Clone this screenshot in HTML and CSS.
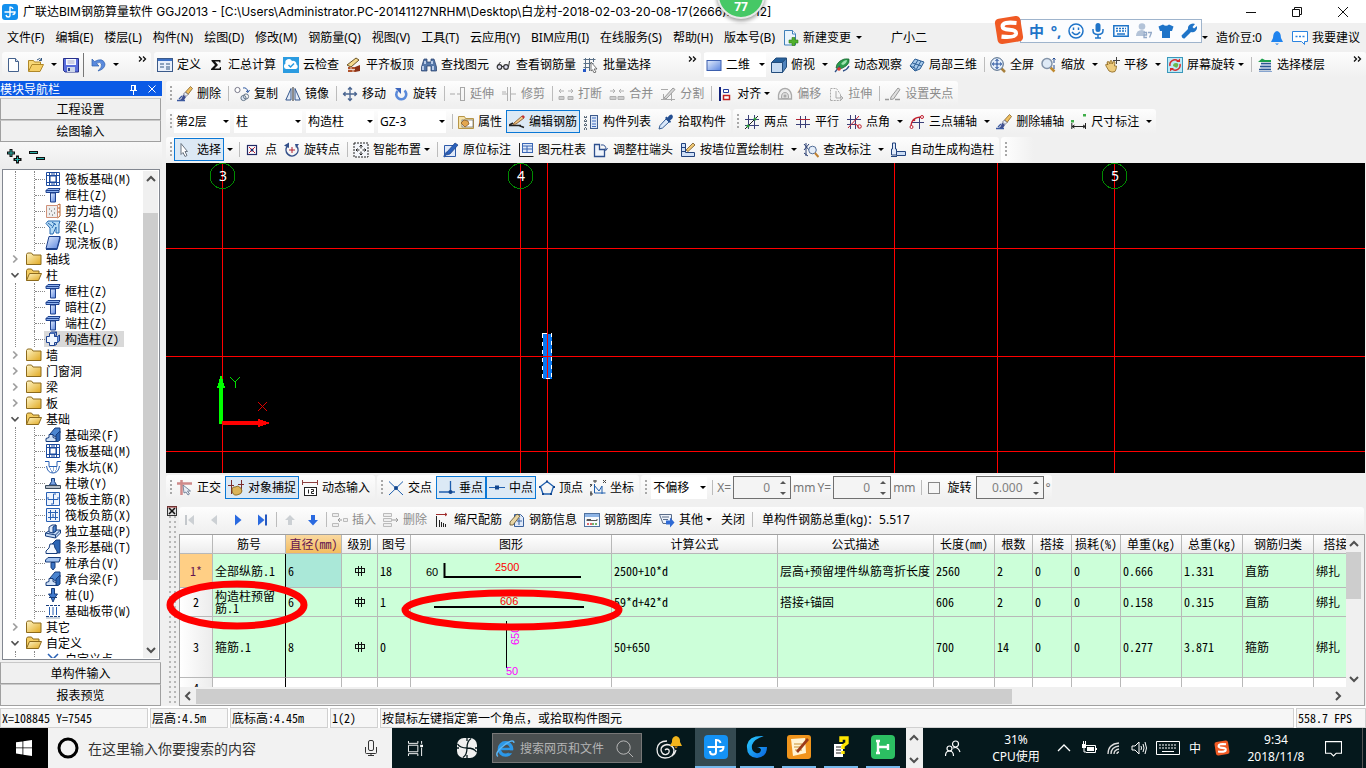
FILE: index.html
```html
<!DOCTYPE html>
<html lang="zh-CN">
<head>
<meta charset="utf-8">
<title>广联达BIM钢筋算量软件 GGJ2013</title>
<link rel="stylesheet" href="styles.css">
</head>
<body>
<svg class="sprite" aria-hidden="true">
<defs>
<linearGradient id="gb" x1="0" y1="0" x2="1" y2="1"><stop offset="0" stop-color="#e4edfc"/><stop offset="1" stop-color="#5b86e0"/></linearGradient>
<linearGradient id="gy" x1="0" y1="0" x2="1" y2="1"><stop offset="0" stop-color="#fff6c8"/><stop offset="1" stop-color="#e0a820"/></linearGradient>
<linearGradient id="gs" x1="0" y1="0" x2="1" y2="1"><stop offset="0" stop-color="#2ad0ff"/><stop offset="1" stop-color="#0a62e0"/></linearGradient>
</defs>
<symbol id="app" viewBox="0 0 16 16"><rect width="16" height="16" rx="3" fill="#1390ee"/><path d="M8 2.500v9q0 1.500-1.800 1.500T4 11M2.500 8h10.500q0 2.500-2.500 2.500M8 3q2.500 0 3 2" fill="none" stroke="#fff" stroke-width="1.400"/></symbol>
<symbol id="new" viewBox="0 0 16 16"><path d="M3.500 1.500h7l3 3v10h-10z" fill="#fdfeff" stroke="#44618c"/><path d="M10.500 1.500v3h3" fill="#cfe0f5" stroke="#44618c"/></symbol>
<symbol id="open" viewBox="0 0 16 16"><path d="M.5 14V3.500h5l1 1.500h6v2" fill="#f8d878" stroke="#b08828"/><path d="M.5 14.500 4 7.500h11.500L12 14.500z" fill="#f6cf66" stroke="#b08828"/><path d="M9 3q3-3 4.500 0m0-2v2.500H11" fill="none" stroke="#31557f"/></symbol>
<symbol id="save" viewBox="0 0 16 16"><path d="M.5 1.500h15v13.500H2L.5 13.500z" fill="#5a6edd" stroke="#27308b"/><rect x="3" y="2" width="10" height="6" fill="#f4f7ff"/><path d="M4.500 4h7M4.500 6h7" stroke="#aac"/><rect x="4" y="10" width="8" height="5" fill="#cdd6ea"/><rect x="5" y="11" width="2" height="3" fill="#27408b"/></symbol>
<symbol id="undo" viewBox="0 0 16 16"><path d="M2 2v7h7L6.500 6.500Q10 4 11.500 7 12.500 10 8 14q7-2 7-7Q13 0 4.500 4.500z" fill="#5a8ade" stroke="#2c5fae" stroke-width=".7"/></symbol>
<symbol id="form" viewBox="0 0 16 16"><rect x=".5" y="1.500" width="15" height="13" fill="#e8effa" stroke="#3b5a8a"/><path d="M1 3h14" stroke="#3b6fc4" stroke-width="2"/><path d="M3 7h4M3 10h4M9 7h4M9 10h4M9 12h4" stroke="#31557f"/></symbol>
<symbol id="sigma" viewBox="0 0 16 16"><path d="M3.500 3h9v2.500h-1L11 4.500H7L10 8l-3.500 3.500H11.500l.5-1.500h1V13H3v-1L7 8 3.500 4z" fill="#111"/></symbol>
<symbol id="cloud" viewBox="0 0 16 16"><rect width="16" height="16" fill="#2b9be0"/><path d="M3 12a3 3 0 0 1-.5-5.500A3.500 3.500 0 0 1 9 4a3.500 3.500 0 0 1 4.500 3.500 2.500 2.500 0 0 1-.5 4.500z" fill="#fff"/><path d="m5.500 8 2 2 3.500-3.500" fill="none" stroke="#2b9be0" stroke-width="1.500"/></symbol>
<symbol id="slab" viewBox="0 0 16 16"><path d="m1 8 9-7 3 2-8 7z" fill="#f5d98c" stroke="#6b5426"/><path d="M2 10h7v5H2z" fill="#b1532c"/><path d="M2 12.500h7M5 10v2.500M7 12.500V15" stroke="#fff" stroke-width=".7"/><path d="m9 10 5-2v6l-5 1z" fill="#8a3218"/></symbol>
<symbol id="bino" viewBox="0 0 16 16"><path d="M3 2h3v3h4V2h3l2.500 8v4H10V9H6v5H.5v-4z" fill="#5577a8" stroke="#213a68" stroke-width=".7"/><path d="M2 9v4M12 9v4M4 4v3M11 4v3" stroke="#dbe8fb" stroke-width="1.500"/></symbol>
<symbol id="glass" viewBox="0 0 16 16"><circle cx="3.500" cy="10" r="2.300" fill="#dde" stroke="#333" stroke-width="1.200"/><circle cx="10" cy="10" r="2.300" fill="#dde" stroke="#333" stroke-width="1.200"/><path d="M6 9.500h2M12.500 10l1-6M2 8l2.500-3" fill="none" stroke="#333"/></symbol>
<symbol id="batch" viewBox="0 0 16 16"><path d="M.5 2.500h12M.5 6.500h10M.5 10.500h6M2.500 1v13M6.500 1v13M10.500 1v4" stroke="#596f86" fill="none"/><rect x="0" y="12" width="3" height="3" fill="#2458c8"/><path d="m8 5 6 7h-3l2 3-2 .8-1.500-3L8 14z" fill="#fff" stroke="#555" stroke-width=".8"/></symbol>
<symbol id="rect2d" viewBox="0 0 16 16"><rect x="1" y="3.500" width="14" height="10" fill="url(#gb)" stroke="#3c5fae"/></symbol>
<symbol id="cube" viewBox="0 0 16 16"><path d="M.5 5.500 5 1h10.500l-4 4.500z" fill="#24609c" stroke="#234d7c"/><path d="M.5 5.500h11v10H.5z" fill="#c6dbf2" stroke="#234d7c"/><path d="m11.500 5.500 4-4.500v9l-4 5.500z" fill="#4f83bd" stroke="#234d7c"/></symbol>
<symbol id="orbit" viewBox="0 0 16 16"><path d="M2 11Q2 7 6 4t9-2q1 4-3 7t-7 3z" fill="#2b9c4c" stroke="#18602e" stroke-width=".7"/><path d="M7 7q3-4 6-4 0 3-4 5z" fill="#9ee3ae"/><path d="M1 15 6 9m3 5q4-1 6-5" stroke="#2e4f86" stroke-width="1.300" fill="none"/><circle cx="5" cy="12" r="1.800" fill="#e03a2a"/></symbol>
<symbol id="local3d" viewBox="0 0 16 16"><path d="M1 9 6 2l9 3-4 7-5 2z" fill="#a7c9ea" stroke="#2d5f96"/><path d="m3.500 6 9 3M9 3 4 11M12 4 7 13M1 9l5 2v3" stroke="#2d5f96" fill="none"/></symbol>
<symbol id="full" viewBox="0 0 16 16"><path d="m11.500 11.500 3.500 3.500" stroke="#a8803c" stroke-width="2.500"/><circle cx="7" cy="7" r="6.300" fill="#e4eefb" stroke="#46607f"/><path d="M7 2.500v9M2.500 7h9M5.500 4 7 2.300 8.500 4M5.500 10 7 11.700 8.500 10M4 5.500 2.300 7 4 8.500M10 5.500 11.700 7 10 8.500" fill="none" stroke="#1f4c9a"/></symbol>
<symbol id="zoom" viewBox="0 0 16 16"><path d="m9.500 10.500 4 4" stroke="#c08a30" stroke-width="2.500"/><circle cx="6" cy="6.500" r="5" fill="#dfeaf6" stroke="#8393a8" stroke-width="1.500"/><path d="M13 1v5m-1.500-3.500L13 1l1.500 1.500M13 8v4" stroke="#234a90" fill="none"/></symbol>
<symbol id="hand" viewBox="0 0 16 16"><path d="M2 9q-1-2 1-2l1 1-1-3q1-1 2 0l1 2V4q1-1 2 0v3l1-2q1-1 2 0L10.500 9l2 0q0 3-1.500 5.500Q8 16 5 14z" fill="#edcb7c" stroke="#8a6420" stroke-width=".8"/><path d="M12.500 0v7M9 3.500h7" stroke="#444"/></symbol>
<symbol id="scrrot" viewBox="0 0 16 16"><rect x=".5" y=".5" width="15" height="15" fill="#bfe8f6" stroke="#3a98bb"/><path d="M3 9a5 5 0 0 1 8-5M13 7a5 5 0 0 1-8 5" fill="none" stroke="#d82c2c" stroke-width="1.500"/><path d="M9 5h4V1.500zM7 11H3v3.500z" fill="#d82c2c"/><path d="M6 9q0-3 3-3t2 3-3 1z" fill="#6ab84c"/></symbol>
<symbol id="floor" viewBox="0 0 16 16"><path d="M1 5 5 1.500 8 3h6v2z" fill="#1ea04c"/><path d="M4 6.500h10M3 9.500h11M2 12.500h12" stroke="#2c5793" stroke-width="1.600"/><path d="M2 14.500h13M4 8h10M4 11h10" stroke="#86a4cf"/></symbol>
<symbol id="brush" viewBox="0 0 16 16"><path d="m8.500 6 5-5.500 2 2L11 8.500z" fill="#f0c060" stroke="#735018" stroke-width=".7"/><path d="m6.500 8 2-2 2.500 2.500L9 10.500z" fill="#e8eef8" stroke="#556" stroke-width=".7"/><path d="M6 8.500 9 11l-2 3H3q2-1 3-5.500z" fill="#3f4f8f"/><path d="M0 14.500h8M2 13l3-3" stroke="#3c5aa0" stroke-width="1.300"/></symbol>
<symbol id="copy" viewBox="0 0 16 16"><circle cx="3.500" cy="4" r="2.600" fill="#fff" stroke="#778"/><circle cx="9.500" cy="12" r="2.600" fill="#dfe7f4" stroke="#678"/><circle cx="12" cy="10.500" r="2.600" fill="none" stroke="#678"/><path d="M9 2q4-1 5 4m-2-1 2 1.500L15.500 4" stroke="#2d57a0" fill="none"/></symbol>
<symbol id="mirror" viewBox="0 0 16 16"><path d="M.8 14 6 2.500V14zM15.200 14 10 2.500V14z" fill="#e3ebf7" stroke="#35578c"/><path d="M8 1v14" stroke="#222"/></symbol>
<symbol id="move" viewBox="0 0 16 16"><path d="M8 1v14M1 8h14M6 3.500 8 1.500l2 2M6 12.500 8 14.500l2-2M3.500 6 1.500 8l2 2M12.500 6 14.500 8l-2 2" fill="none" stroke="#4a6590" stroke-width="1.300"/></symbol>
<symbol id="rot" viewBox="0 0 16 16"><path d="M4.500 5a5 5 0 1 0 7-.5" fill="none" stroke="#5a8ada" stroke-width="2.600"/><path d="M2 2h6v6z" fill="#3c65bc"/></symbol>
<symbol id="ext" viewBox="0 0 16 16"><path d="M0 8h5M7 8h3M10.500 1v14M14.500 1v14M10 1.500h5M10 14.500h5" stroke="#a8a8a8" fill="none"/></symbol>
<symbol id="trim" viewBox="0 0 16 16"><path d="M1 8h5M10 8h5M1 6h4M6.500 1v14M9.500 1v14" stroke="#b0b0b0" fill="none"/></symbol>
<symbol id="brk" viewBox="0 0 16 16"><path d="M1 10.500h5v3H1zM10 10.500h5v3h-5z" fill="#ccc" stroke="#b0b0b0"/><path d="M1 5h5M10 5h5M3 3 1 5l2 2M13 3l2 2-2 2" stroke="#b0b0b0" fill="none"/></symbol>
<symbol id="merge" viewBox="0 0 16 16"><path d="M1 10.500h6v3H1zM9 10.500h6v3H9z" fill="#ccc" stroke="#b0b0b0"/><path d="M1 5h5M10 5h5M4 3l2 2-2 2M12 3l-2 2 2 2" stroke="#b0b0b0" fill="none"/></symbol>
<symbol id="split" viewBox="0 0 16 16"><path d="M1 3.500h7M1 13.500h14M11.500 6v9M3.500 8v6" stroke="#aaa" fill="none"/><path d="m4 12 9-10 2 1.500L6 13z" fill="#d8d8d8" stroke="#9a9a9a"/></symbol>
<symbol id="align" viewBox="0 0 16 16"><path d="M3 1v14" stroke="#10207a" stroke-width="2"/><path d="M6.500 3.500h5v3h-5z" fill="#fff" stroke="#223c9c"/><path d="M6.500 9.500h6v4h-6z" fill="#fff" stroke="#c02020" stroke-width="1.500"/></symbol>
<symbol id="offset" viewBox="0 0 16 16"><path d="M1.500 13V9Q3 2.500 8 2.500T14.500 9v4z" fill="#eee" stroke="#aaa" stroke-width="1.300"/><path d="M4.500 12.500Q4 6.500 8 6.500t3.500 6z" fill="#ddd" stroke="#aaa"/><circle cx="8" cy="10" r="1.500" fill="#aaa"/></symbol>
<symbol id="pull" viewBox="0 0 16 16"><path d="M2.500 14.500v-12h6l4 6v6z" fill="none" stroke="#aaa" stroke-dasharray="2 1"/><path d="M8 5v7h7M12 9l3 3-3 3" fill="none" stroke="#aaa"/></symbol>
<symbol id="grips" viewBox="0 0 16 16"><path d="m6 11 7-9 2 1.500L8.500 13l-3 .5z" fill="#e0e0e0" stroke="#999"/><path d="M0 13.500h4M10 13.500h5" stroke="#999" stroke-width="1.500"/></symbol>
<symbol id="prop" viewBox="0 0 16 16"><path d="M.5 2.500h6l1 2h8v10H.5z" fill="#f6e2a8" stroke="#b79548"/><rect x="4" y="6" width="11" height="7" fill="#fff" stroke="#666" stroke-width=".7"/><path d="m3 9 3-3 4 1 1 3-4 3z" fill="#e3a650" stroke="#7c4f18" stroke-width=".7"/></symbol>
<symbol id="editbar" viewBox="0 0 16 16"><path d="M0 11.500h12M0 11l4-2M10 11.500l5 2" stroke="#222" stroke-width="1.400"/><path d="m5 9 8-7 2 2-8 6-3 .5z" fill="#f2c684" stroke="#7a4c20" stroke-width=".8"/><path d="m12.500 2.500 2 2L16 3l-2-2z" fill="#c03030"/></symbol>
<symbol id="list" viewBox="0 0 16 16"><path d="M1 3h3M1 7h3M1 11h3M1 15h3" stroke="#345" stroke-dasharray="1 1" stroke-width="1.500"/><path d="M2.500 3v11" stroke="#567" stroke-dasharray="1 1"/><rect x="7.500" y="1.500" width="7" height="13" fill="#dbe6f6" stroke="#3c5a8c"/><path d="M9 4h4M9 7h4M9 10h4M9 12.500h4" stroke="#3c6ac0"/></symbol>
<symbol id="pick" viewBox="0 0 16 16"><path d="m1 15 1-3.500L8 5l3 3-6.500 6z" fill="#dbe9fb" stroke="#325b93"/><path d="M7 4 12 9l1-1.500L12 6.500q4-2 2.500-5t-5 2L8.500 2.500z" fill="#244f92"/></symbol>
<symbol id="ax2" viewBox="0 0 16 16"><path d="M4.500 1v14M10.500 1v14M1 5.500h14M1 11.500h14" stroke="#3a3f78" fill="none"/><path d="M1 15 14 2" stroke="#222"/><circle cx="4" cy="12" r="1.500" fill="#2a9c38"/><circle cx="11" cy="5" r="1.500" fill="#2a9c38"/></symbol>
<symbol id="axp" viewBox="0 0 16 16"><path d="M5.500 2v12M10.500 2v12" stroke="#3a3f78"/><path d="M1 5.500h14" stroke="#b42335"/><path d="M1 10.500h14" stroke="#3a3f78"/></symbol>
<symbol id="axa" viewBox="0 0 16 16"><path d="M4.500 1v14M9.500 1v14M1 5.500h14M1 10.500h9" stroke="#3a3f78" fill="none"/><path d="M2 14 13 2M8 10q4 0 5 4" stroke="#c02030" fill="none"/><circle cx="13.500" cy="12.500" r="1.800" fill="none" stroke="#c02030"/></symbol>
<symbol id="ax3" viewBox="0 0 16 16"><path d="M10.500 3v12M3 8.500h12" stroke="#3a3f78"/><path d="M2 13Q2 3 13 3" fill="none" stroke="#c02030" stroke-width="1.300"/><circle cx="2.500" cy="13" r="1.500" fill="#fff" stroke="#c02030"/><circle cx="13" cy="3" r="1.500" fill="#fff" stroke="#c02030"/><circle cx="5" cy="6" r="1.300" fill="#c02030"/></symbol>
<symbol id="dim" viewBox="0 0 16 16"><path d="M.8 9v6M14.500 9v6M1 12.500h13M3.500 11 1 12.500 3.500 14M12 11l2.500 1.500L12 14" stroke="#222" fill="none"/><path d="M0 6h3v2.500H0zM12 0h3v2.500h-3z" fill="#3fae49"/></symbol>
<symbol id="arrow" viewBox="0 0 16 16"><path d="m4 1.500 6.500 8H8l2 4-2 1-2-4-2 2z" fill="#fff" stroke="#6a7480"/></symbol>
<symbol id="pt" viewBox="0 0 16 16"><rect x="2.500" y="3.500" width="9" height="9" fill="#fff" stroke="#222a66" stroke-width="1.200"/><path d="m4 5 6 6M10 5l-6 6" stroke="#c22030"/><circle cx="7" cy="8" r="1.500" fill="#222a66"/></symbol>
<symbol id="rotpt" viewBox="0 0 16 16"><path d="M3.500 4A6 6 0 1 0 13 4.500" fill="none" stroke="#334f8a" stroke-width="1.500"/><path d="M0 3.500 5 .5v5.500zM15 2l-4 0 1 4z" fill="#334f8a"/><path d="M8 5v6M5 8h6" stroke="#b02030"/></symbol>
<symbol id="smart" viewBox="0 0 16 16"><rect x="1" y="1" width="14" height="14" fill="#f4f6fa" stroke="#222" stroke-dasharray="2 1"/><path d="M8 3v10M3 8h10M6.500 4.500 8 3l1.500 1.500M6.500 11.500 8 13l1.500-1.500M4.500 6.500 3 8l1.500 1.500M11.500 6.500 13 8l-1.500 1.500" stroke="#222" fill="none"/><rect x="6.500" y="6.500" width="3" height="3" fill="#fff"/></symbol>
<symbol id="note" viewBox="0 0 16 16"><path d="M1.500 3.500h11v11h-11z" fill="#dfe9f9" stroke="#2d5aa8"/><path d="m4 10 8-9 3 2-8 9-3.500 1z" fill="#2b62bd" stroke="#1c3f80" stroke-width=".7"/><path d="M1 15 4 10" stroke="#2d5aa8" stroke-width="2"/></symbol>
<symbol id="ctable" viewBox="0 0 16 16"><path d="M1.500 1v13.500h14" fill="none" stroke="#222"/><rect x="4.500" y="1.500" width="10" height="9" fill="#dfe9f9" stroke="#3a66b4"/><path d="M5 4h9M9 4v6M5 7h9" stroke="#3a66b4"/></symbol>
<symbol id="cend" viewBox="0 0 16 16"><path d="M1.500 2.500h5v5h5v7h-10z" fill="#eef3fb" stroke="#2d4f8e" stroke-width="1.300"/><path d="M8 3q5-1 5 5m-2-1 2 1.500L14.500 6" fill="none" stroke="#2d4f8e"/></symbol>
<symbol id="wall" viewBox="0 0 16 16"><path d="M1.500 1.500h4v9h9v4h-13z" fill="#cfe0f8" stroke="#22437e"/><path d="M1 5.500h4M1 9.500h4" stroke="#22437e"/><path d="m6 8 7-7 2 2-7 6.500z" fill="#f0c874" stroke="#604010" stroke-width=".7"/></symbol>
<symbol id="check" viewBox="0 0 16 16"><path d="m1 2 5 6M6 2 1 8M3 1v13M1 11l4 3" stroke="#2a3f72"/><circle cx="9.500" cy="8" r="3.800" fill="#e4edf9" stroke="#516c96"/><path d="m12 11 3.500 4" stroke="#c08030" stroke-width="2"/></symbol>
<symbol id="auto" viewBox="0 0 16 16"><path d="M2.500 1h3v6h1v6h-5V7h1z" fill="#dfe9f9" stroke="#22437e"/><path d="M6.500 9.500h9v4h-9z" fill="#cbdcf4" stroke="#22437e"/><path d="M1 14.500h6" stroke="#22437e"/></symbol>
<symbol id="ortho" viewBox="0 0 16 16"><path d="M0 3.500h15M4.500 0v15" stroke="#cf8a8a" stroke-width="2.500"/><path d="m6 5 7.500 6h-3l2 3-1.500 1-2-3L7 13z" fill="#e8edf5" stroke="#5d6f88" stroke-width=".8"/></symbol>
<symbol id="osnap" viewBox="0 0 16 16"><path d="M3.500 0v14M13.500 0v12M0 5.500h6M10 4.500h6" stroke="#7a2d2d"/><path d="M4 9q1-3 3-2l3-1q4 2 4 5t-5 4-5-6z" fill="#dcb458" stroke="#7d5c18" stroke-width=".8"/></symbol>
<symbol id="dynin" viewBox="0 0 16 16"><path d="M0 2.500h16M.5 0v5M15.500 0v5" stroke="#8c4040"/><rect x="2.500" y="7.500" width="12" height="8" fill="#fff" stroke="#222"/><path d="M6.500 9.500v4M9 9.500h2.500v2H9.500v2H12" stroke="#222" fill="none"/></symbol>
<symbol id="cross" viewBox="0 0 16 16"><path d="M1 1.500 15 15M15 1.500 1 15" stroke="#1f5fae"/><circle cx="8" cy="8" r="2" fill="#12468e"/></symbol>
<symbol id="perp" viewBox="0 0 16 16"><path d="M11.500 1v11M0 12h16" stroke="#1f5fae" stroke-width="1.300"/><circle cx="11.500" cy="12" r="2" fill="#12468e"/></symbol>
<symbol id="mid" viewBox="0 0 16 16"><path d="M0 7.500h16" stroke="#1f5fae"/><path d="M6 5.500h4v4H6z" fill="#12468e"/></symbol>
<symbol id="vert" viewBox="0 0 16 16"><path d="M8 1.500 14.500 6.500 12 14H4L1.500 6.500z" fill="none" stroke="#1f5fae" stroke-width="1.300"/><path d="M7 .5h2v2H7zM0 6h2v2H0zM14 6h2v2h-2zM3 13h2v2H3zM11 13h2v2h-2z" fill="#12468e"/></symbol>
<symbol id="coord" viewBox="0 0 16 16"><path d="M4.500 4v9h11M4 5l5 6 3-5v8" fill="none" stroke="#1f5fae"/><path d="m0 4 2 2m0-2-2 3M1 11v3M13 0l3 3m0-3-3 3M4 0h2v2H4zM0 13h2v2H0z" stroke="#444" fill="none"/></symbol>
<symbol id="first" viewBox="0 0 16 16"><path d="M4 3v10" stroke="#c4c8cc" stroke-width="2"/><path d="M12 3v10L6 8z" fill="#ccd0d4"/></symbol>
<symbol id="prev" viewBox="0 0 16 16"><path d="M11 3v10L5 8z" fill="#ccd0d4"/></symbol>
<symbol id="next" viewBox="0 0 16 16"><path d="M5 2.500v11L11.500 8z" fill="#2a6ae0"/></symbol>
<symbol id="last" viewBox="0 0 16 16"><path d="M12 2.500v11" stroke="#2458c0" stroke-width="2"/><path d="M4 2.500v11L10.500 8z" fill="#2a6ae0"/></symbol>
<symbol id="up" viewBox="0 0 16 16"><path d="m8 3 5 5h-3v5H6V8H3z" fill="#ccd0d4"/></symbol>
<symbol id="down" viewBox="0 0 16 16"><path d="m8 13.500 5-5.500h-3V3H6v5H3z" fill="#2a6ae0"/></symbol>
<symbol id="ins" viewBox="0 0 16 16"><path d="M.5 1.500h6v3h-6zM.5 11.500h6v3h-6zM11.500 6.500h4v3h-4z" fill="#eee" stroke="#bbb"/><path d="M10 8H6m2-2L6 8l2 2" stroke="#999" fill="none"/></symbol>
<symbol id="del" viewBox="0 0 16 16"><path d="M.5 1.500h8v3h-8zM.5 6.500h8v3h-8zM.5 11.500h8v3h-8z" fill="#eee" stroke="#bbb"/><path d="M9 8h6m-2-2 2 2-2 2" stroke="#999" fill="none"/></symbol>
<symbol id="scale" viewBox="0 0 16 16"><path d="M2 2.500h11M11 1l2 1.500L11 4" stroke="#a02c2c" fill="none"/><path d="M2.500 4v11M5.500 8v7M7.500 10v5M9.500 11v4M11.500 12v3" stroke="#222"/></symbol>
<symbol id="info" viewBox="0 0 16 16"><path d="M5.500 2.500h6l3 3v9h-9z" fill="#dfe9f9" stroke="#38609c"/><path d="m1 10 7-8 3 2-7 9H1z" fill="#e9d6a4" stroke="#5a4a28" stroke-width=".8"/><path d="M8 9h5M10 6v7" stroke="#38609c"/></symbol>
<symbol id="lib" viewBox="0 0 16 16"><rect x=".5" y="1.500" width="15" height="13" fill="#f7fafd" stroke="#50729f"/><path d="M1 3.500h14" stroke="#8db4e6" stroke-width="3"/><path d="M3 9V7.500h4M3 8.500h10V7" stroke="#555" fill="none"/><path d="M3 12h2M6 12h2" stroke="#d83a3a" stroke-width="1.500"/><path d="M8 12h2M11 12h2" stroke="#4a9a3c" stroke-width="1.500"/></symbol>
<symbol id="other" viewBox="0 0 16 16"><path d="M.5 2.500h12v9H4z" fill="#edf2fa" stroke="#5a6c88"/><path d="M3 5h7M4 7.500h5" stroke="#5a6c88"/><path d="M7 8.500h4V5.500l4.500 5-4.500 5v-3H7z" fill="#2f6ad4"/></symbol>
<symbol id="fold" viewBox="0 0 16 16"><path d="M.5 13.500v-10l1-1.500h4l1.500 2h8v9.500z" fill="url(#gy)" stroke="#8c6a1c"/></symbol>
<symbol id="fopen" viewBox="0 0 16 16"><path d="M.5 13.500v-10l1-1.500h4l1.500 2h6v2" fill="#f4cd62" stroke="#8c6a1c"/><path d="m.5 13.500 3-7h12l-3 7z" fill="url(#gy)" stroke="#8c6a1c"/></symbol>
<symbol id="raft" viewBox="0 0 16 16"><path d="M1.500 1.500h13v13h-13z" fill="#fff" stroke="#1d4b9e"/><path d="M4.500 1v14M7 1v14M11.500 1v14M9 1v14M1 4.500h14M1 11.500h14" stroke="#1d4b9e"/><rect x="5" y="5" width="6" height="6" fill="#fff" stroke="#1d4b9e"/></symbol>
<symbol id="col" viewBox="0 0 16 16"><path d="M1 3.500 3 1.500h12l-1 2v2H1z" fill="#8fb2ee" stroke="#1d418e"/><path d="M1 3.500h13" stroke="#1d418e"/><path d="M5.500 6h5v9h-5z" fill="url(#gb)" stroke="#1d418e"/></symbol>
<symbol id="shear" viewBox="0 0 16 16"><path d="M1.500 2.500h11v12h-11z" fill="#eee" stroke="#d09078"/><path d="M12.500 2 15 1v12l-2.500 2M13 5h2M13 9h2" stroke="#b8642c" fill="none"/><path d="M4 6h1m4 0h1M6 8h1M4 11h1m4-1h1m-3 2h1" stroke="#555"/></symbol>
<symbol id="beam" viewBox="0 0 16 16"><path d="M1 4.500 3 2h12l-1 3v9h-3V8l-3 7H5V9z" fill="#b7dcf6" stroke="#2568b0"/><path d="m3 4 4 3m0-4 4 3M7 9l3-5" stroke="#2568b0"/></symbol>
<symbol id="plate" viewBox="0 0 16 16"><path d="M4 1.500h11l-3 12H1z" fill="url(#gb)" stroke="#1d418e"/><path d="M15 1.500v2.500l-3 10.500H1" fill="none" stroke="#1d418e"/></symbol>
<symbol id="gz" viewBox="0 0 16 16"><path d="M4.500 2.500h5v3h3v6h-3v3h-5v-3h-3v-6h3z" fill="#f0f6ff" stroke="#1d418e"/><path d="m4.500 2.500 2-1.500h5l-2 1.500M9.500 5.500l2-1V1M12.500 5.500l2-1.500v6l-2 1.500M9.500 14.500l2-1v-2" fill="#6f96dd" stroke="#1d418e"/></symbol>
<symbol id="fbeam" viewBox="0 0 16 16"><path d="m5 7 5-6h5v5l-4 4z" fill="#4b85d0" stroke="#173d7c"/><path d="m11 8 4-4v9l-2 1.500h-2z" fill="#2c65b4" stroke="#173d7c"/><path d="M1 14.500v-3l3-1V7.500h4v3l3 1v3z" fill="#d3e3f7" stroke="#173d7c"/></symbol>
<symbol id="pit" viewBox="0 0 16 16"><path d="M0 2.500h4v5h8v-5h4M1.500 7q1 7 6.500 7t6.500-7" fill="none" stroke="#2860b4"/><path d="M5 10h1m2 1h1m2-1h1M7 13h1M4 8h1m6 0h1M6 12h1m3 0h1M8 9h1" stroke="#2860b4"/></symbol>
<symbol id="pier" viewBox="0 0 16 16"><path d="M6.500 3.500h3v3l2 3.500h-7l2-3.500z" fill="#7aa2e0" stroke="#173d7c"/><path d="M.5 10.500h15v3H.5z" fill="#b6bec8" stroke="#3a4a5c"/></symbol>
<symbol id="rmain" viewBox="0 0 16 16"><path d="M1.500 1.500h13v13h-13z" fill="#eef4fd" stroke="#2860b4"/><path d="M8.500 3v10M3 8.500h10M3 8.500V6M13 8.500V6M6 13h2.500M8.500 3H11" stroke="#2860b4" fill="none"/></symbol>
<symbol id="rneg" viewBox="0 0 16 16"><path d="M1.500 1.500h13v13h-13z" fill="#eef4fd" stroke="#2860b4"/><path d="M5.500 3v10M10.500 3v10M3 5.500h10M3 10.500h10M8 7v3" stroke="#2860b4"/></symbol>
<symbol id="indep" viewBox="0 0 16 16"><path d="m.5 10 5-3 10 0v3l-5 5-10-2z" fill="#c4daf6" stroke="#173d7c"/><path d="m4 4 3-2 4 0v6l-3 2-4-1z" fill="#dbe8fa" stroke="#173d7c"/><path d="m8 4 3-2v6l-3 2z" fill="#4b85d0" stroke="#173d7c"/><path d="m.5 10 10 2 5-5M10.500 12v3" fill="none" stroke="#173d7c"/></symbol>
<symbol id="strip" viewBox="0 0 16 16"><path d="m7 5 4-4h4l0 13h-4z" fill="#2c65b4" stroke="#173d7c"/><path d="M1 14.500V12l3-3 1-4h4l1 4 2 3v2.500z" fill="#f3f8ff" stroke="#173d7c"/></symbol>
<symbol id="cap" viewBox="0 0 16 16"><path d="M.5 5 3 2.500h12.500L14 7H.5z" fill="#a4c4f0" stroke="#173d7c"/><path d="M6 7.500h4v5L8 15l-2-2.500z" fill="#3c74c4" stroke="#173d7c"/></symbol>
<symbol id="pile" viewBox="0 0 16 16"><path d="M6.500 1.500h3V7h3L10 10.500 8 15l-2-4.500L3.500 7h3z" fill="#3f78cc" stroke="#173d7c"/><path d="M4 10.500h8" stroke="#173d7c"/></symbol>
<symbol id="band" viewBox="0 0 16 16"><path d="M1 2.500h14M1 13.500h14" stroke="#173d7c" stroke-dasharray="3 1"/><path d="M4.500 4v8M11.500 4v8M8 4v8" stroke="#2860b4"/><path d="M1 15h14" stroke="#9ab"/></symbol>
<symbol id="cpoint" viewBox="0 0 16 16"><path d="m3 3 10 10M13 3 3 13" stroke="#2860b4" stroke-width="1.500"/></symbol>
<symbol id="newchg" viewBox="0 0 16 16"><path d="M1.500.500h8l3 3.500v11h-11z" fill="#eaf4fc" stroke="#3f7fb8"/><path d="M9.500.500v3.500h3" fill="#fff" stroke="#3f7fb8"/><path d="M9 7.500h3v2.500h3v3h-3v2.500H9V13H6v-3h3z" fill="#4fb02c" stroke="#2f7c18" stroke-width=".6"/></symbol>
<symbol id="bell" viewBox="0 0 16 16"><path d="M8 1q4 1 4 7l2 4H2l2-4Q4 2 8 1z" fill="#1f83ee"/><path d="M6 13.500h4L8 15z" fill="#1f83ee"/></symbol>
<symbol id="chat" viewBox="0 0 16 16"><path d="M.5 1.500h15v10h-3v3l-3-3h-9z" fill="#fff" stroke="#2c84e0"/><path d="M3.500 6.500h9" stroke="#2c84e0" stroke-dasharray="2 1.500" stroke-width="1.300"/></symbol>
<symbol id="sogou" viewBox="0 0 28 28"><rect x="2" y="2" width="24" height="24" rx="4" fill="#f05a24" transform="rotate(-9 14 14)"/><path d="M21 7.500Q8 6 8 10.500q0 3 6.500 3.200 6.500.3 6 3.800-.7 4-13.500 2.700" fill="none" stroke="#fff" stroke-width="3.800"/></symbol>
<symbol id="smile" viewBox="0 0 16 16"><circle cx="8" cy="8" r="7" fill="none" stroke="#1f74c8" stroke-width="1.500"/><path d="M5.500 4.500v2.500M10.500 4.500v2.500M4 9q4 5 8 0" stroke="#1f74c8" stroke-width="1.500" fill="none"/></symbol>
<symbol id="mic" viewBox="0 0 16 16"><rect x="5.500" y="0" width="5" height="9" rx="2.500" fill="#1f74c8"/><path d="M3 6v1.500q0 4 5 4t5-4V6M8 11v4M5 15h6" fill="none" stroke="#1f74c8" stroke-width="1.500"/></symbol>
<symbol id="kbd" viewBox="0 0 16 16"><path d="M.8 2.800h14.400v10.400H.8z" fill="none" stroke="#1f74c8" stroke-width="1.500"/><path d="M3 5.500h10M3 8h10" stroke="#1f74c8" stroke-dasharray="2 1" stroke-width="1.500"/><path d="M4 11h8" stroke="#1f74c8" stroke-width="1.500"/></symbol>
<symbol id="user" viewBox="0 0 16 16"><circle cx="6" cy="3.500" r="3.300" fill="#b3c3d8"/><path d="M0 13q0-6 6-6l3 1v5z" fill="#b3c3d8"/><path d="M7.500 9.500h3v2.500H8v2.500h3M12 9.500h3.500L13.500 14.500" fill="none" stroke="#93a9c8" stroke-width="1.300"/></symbol>
<symbol id="shirt" viewBox="0 0 16 16"><path d="M5 1.500q3 2.500 6 0l4.500 2L14 8h-2v7H4V8H2L.5 3.500z" fill="#1f74c8"/></symbol>
<symbol id="wrench" viewBox="0 0 16 16"><path d="M10 1q2-1 4 0l-2.500 3L13 5.500 16 3q.5 3-1.500 5T10 9l-6.500 6.500Q1 16 .5 12.500L7 6Q6.500 2.500 10 1z" fill="#1f74c8"/></symbol>
<symbol id="pinw" viewBox="0 0 16 16"><path d="M6 4.500h5M6.500 4.500v5M10.500 4.500v5M9.500 4.500v5M5 9.500h7M8.500 10v4" stroke="#fff" fill="none"/></symbol>
<symbol id="xw" viewBox="0 0 16 16"><path d="m4.500 4.500 7 7M11.500 4.500l-7 7" stroke="#fff" fill="none"/></symbol>
<symbol id="addp" viewBox="0 0 16 16"><path d="M5 1v8M1 5h8" stroke="#111" stroke-width="3"/><path d="M5 2v6M2 5h6" stroke="#2ab0a8"/><path d="M11.500 7.500v8M7.500 11.500h8" stroke="#111" stroke-width="3"/><path d="M11.500 9v5M9 11.500h5" stroke="#2ab0a8"/></symbol>
<symbol id="subp" viewBox="0 0 16 16"><path d="M0 4.500h9M7 10.500h9" stroke="#111" stroke-width="3"/><path d="M1 4.500h7M8 10.500h7" stroke="#2ab0a8"/></symbol>
<symbol id="cu" viewBox="0 0 16 16"><path d="m4 10 4-4 4 4" fill="none" stroke="#505050" stroke-width="2"/></symbol>
<symbol id="cd" viewBox="0 0 16 16"><path d="m4 6 4 4 4-4" fill="none" stroke="#505050" stroke-width="2"/></symbol>
<symbol id="cr" viewBox="0 0 16 16"><path d="m6 4 4 4-4 4" fill="none" stroke="#505050" stroke-width="2"/></symbol>
<symbol id="cl" viewBox="0 0 16 16"><path d="m10 4-4 4 4 4" fill="none" stroke="#505050" stroke-width="2"/></symbol>
<symbol id="more" viewBox="0 0 10 8"><path d="m1 1.500 2.500 2.500L1 6.500M5 1.500 7.500 4 5 6.500" fill="none" stroke="#111" stroke-width="1.300"/></symbol>
<symbol id="bar" viewBox="0 0 12 12"><path d="M4.500 1v10M7.500 1v10M1.500 3v5M10.500 3v5M1.500 3.500h9M1.500 7.500h9" stroke="#111" fill="none"/></symbol>
</svg>

<header class="title">
  <svg class="i"><use href="#app"/></svg>
  <h1>广联达BIM钢筋算量软件 GGJ2013 - [C:\Users\Administrator.PC-20141127NRHM\Desktop\白龙村-2018-02-03-20-08-17(2666).GGJ12]</h1>
  <div class="wbtns">
    <button aria-label="最小化"><svg viewBox="0 0 12 12"><path d="M1 6.500h10" stroke="#111"/></svg></button>
    <button aria-label="还原"><svg viewBox="0 0 12 12"><path d="M1.500 3.500h7v7h-7zM3.500 3V1.500h7v7H9" fill="none" stroke="#111"/></svg></button>
    <button aria-label="关闭"><svg viewBox="0 0 12 12"><path d="m1 1 10 10M11 1 1 11" stroke="#111"/></svg></button>
  </div>
  <div class="ball">77</div>
</header>

<nav class="menu">
  <button>文件(F)</button><button>编辑(E)</button><button>楼层(L)</button><button>构件(N)</button><button>绘图(D)</button><button>修改(M)</button><button>钢筋量(Q)</button><button>视图(V)</button><button>工具(T)</button><button>云应用(Y)</button><button>BIM应用(I)</button><button>在线服务(S)</button><button>帮助(H)</button><button>版本号(B)</button>
  <button class="newchg"><svg class="i"><use href="#newchg"/></svg>新建变更<i class="dd"></i></button>
  <button class="who">广小二</button>
  <div class="right"><i class="dd"></i><button>造价豆:0</button><svg class="i"><use href="#bell"/></svg><button class="sug"><svg class="i"><use href="#chat"/></svg>我要建议</button></div>
  <div class="ime">
    <svg class="slogo"><use href="#sogou"/></svg>
    <b>中</b><b class="punct">°,</b>
    <svg class="i"><use href="#smile"/></svg><svg class="i"><use href="#mic"/></svg><svg class="i"><use href="#kbd"/></svg><svg class="i"><use href="#user"/></svg><svg class="i"><use href="#shirt"/></svg><svg class="i"><use href="#wrench"/></svg>
  </div>
</nav>

<div class="row top">
  <div class="tb ga">
    <button class="t o" aria-label="新建"><svg class="i"><use href="#new"/></svg></button><button class="t o" aria-label="打开"><svg class="i"><use href="#open"/></svg></button><button class="sp"><i class="dd"></i></button><button class="t o" aria-label="保存"><svg class="i"><use href="#save"/></svg></button><i class="sep tall"></i><button class="t o" aria-label="撤销"><svg class="i"><use href="#undo"/></svg></button><button class="sp"><i class="dd"></i></button>
    <svg class="more"><use href="#more"/></svg>
  </div>
  <div class="tb gb">
    <button class="t"><svg class="i"><use href="#form"/></svg>定义</button><button class="t"><svg class="i"><use href="#sigma"/></svg>汇总计算</button><button class="t"><svg class="i"><use href="#cloud"/></svg>云检查</button><button class="t"><svg class="i"><use href="#slab"/></svg>平齐板顶</button><button class="t"><svg class="i"><use href="#bino"/></svg>查找图元</button><button class="t"><svg class="i"><use href="#glass"/></svg>查看钢筋量</button><button class="t"><svg class="i"><use href="#batch"/></svg>批量选择</button>
    <svg class="more"><use href="#more"/></svg>
  </div>
  <div class="tb gc">
    <span class="cbx"><svg class="i"><use href="#rect2d"/></svg><select aria-label="视图模式" class="s2d"><option>二维</option></select></span>
    <button class="t"><svg class="i"><use href="#cube"/></svg>俯视</button><button class="sp"><i class="dd"></i></button><button class="t"><svg class="i"><use href="#orbit"/></svg>动态观察</button><button class="t"><svg class="i"><use href="#local3d"/></svg>局部三维</button><i class="sep"></i><button class="t"><svg class="i"><use href="#full"/></svg>全屏</button><button class="t"><svg class="i"><use href="#zoom"/></svg>缩放</button><button class="sp"><i class="dd"></i></button><button class="t"><svg class="i"><use href="#hand"/></svg>平移</button><button class="sp"><i class="dd"></i></button><button class="t"><svg class="i"><use href="#scrrot"/></svg>屏幕旋转<i class="dd"></i></button><i class="sep"></i><button class="t"><svg class="i"><use href="#floor"/></svg>选择楼层</button>
    <svg class="more"><use href="#more"/></svg>
  </div>
</div>

<main>
<aside>
  <div class="ahead"><span>模块导航栏</span><svg class="i"><use href="#pinw"/></svg><svg class="i"><use href="#xw"/></svg></div>
  <button class="nav">工程设置</button>
  <button class="nav">绘图输入</button>
  <div class="tools"><svg class="i"><use href="#addp"/></svg><svg class="i"><use href="#subp"/></svg></div>
  <div class="treebox">
    <ul class="tree">
      <li class="open"><ul>
        <li><svg class="i"><use href="#raft"/></svg><span>筏板基础(M)</span></li>
        <li><svg class="i"><use href="#col"/></svg><span>框柱(Z)</span></li>
        <li><svg class="i"><use href="#shear"/></svg><span>剪力墙(Q)</span></li>
        <li><svg class="i"><use href="#beam"/></svg><span>梁(L)</span></li>
        <li><svg class="i"><use href="#plate"/></svg><span>现浇板(B)</span></li>
      </ul></li>
      <li><div class="f"><svg class="c g"><use href="#cr"/></svg><svg class="i"><use href="#fold"/></svg><span>轴线</span></div></li>
      <li><div class="f"><svg class="c"><use href="#cd"/></svg><svg class="i"><use href="#fopen"/></svg><span>柱</span></div><ul>
        <li><svg class="i"><use href="#col"/></svg><span>框柱(Z)</span></li>
        <li><svg class="i"><use href="#col"/></svg><span>暗柱(Z)</span></li>
        <li><svg class="i"><use href="#col"/></svg><span>端柱(Z)</span></li>
        <li class="sel"><svg class="i"><use href="#gz"/></svg><span>构造柱(Z)</span></li>
      </ul></li>
      <li><div class="f"><svg class="c g"><use href="#cr"/></svg><svg class="i"><use href="#fold"/></svg><span>墙</span></div></li>
      <li><div class="f"><svg class="c g"><use href="#cr"/></svg><svg class="i"><use href="#fold"/></svg><span>门窗洞</span></div></li>
      <li><div class="f"><svg class="c g"><use href="#cr"/></svg><svg class="i"><use href="#fold"/></svg><span>梁</span></div></li>
      <li><div class="f"><svg class="c g"><use href="#cr"/></svg><svg class="i"><use href="#fold"/></svg><span>板</span></div></li>
      <li><div class="f"><svg class="c"><use href="#cd"/></svg><svg class="i"><use href="#fopen"/></svg><span>基础</span></div><ul>
        <li><svg class="i"><use href="#fbeam"/></svg><span>基础梁(F)</span></li>
        <li><svg class="i"><use href="#raft"/></svg><span>筏板基础(M)</span></li>
        <li><svg class="i"><use href="#pit"/></svg><span>集水坑(K)</span></li>
        <li><svg class="i"><use href="#pier"/></svg><span>柱墩(Y)</span></li>
        <li><svg class="i"><use href="#rmain"/></svg><span>筏板主筋(R)</span></li>
        <li><svg class="i"><use href="#rneg"/></svg><span>筏板负筋(X)</span></li>
        <li><svg class="i"><use href="#indep"/></svg><span>独立基础(P)</span></li>
        <li><svg class="i"><use href="#strip"/></svg><span>条形基础(T)</span></li>
        <li><svg class="i"><use href="#cap"/></svg><span>桩承台(V)</span></li>
        <li><svg class="i"><use href="#fbeam"/></svg><span>承台梁(F)</span></li>
        <li><svg class="i"><use href="#pile"/></svg><span>桩(U)</span></li>
        <li><svg class="i"><use href="#band"/></svg><span>基础板带(W)</span></li>
      </ul></li>
      <li><div class="f"><svg class="c g"><use href="#cr"/></svg><svg class="i"><use href="#fold"/></svg><span>其它</span></div></li>
      <li><div class="f"><svg class="c"><use href="#cd"/></svg><svg class="i"><use href="#fopen"/></svg><span>自定义</span></div><ul>
        <li><svg class="i"><use href="#cpoint"/></svg><span>自定义点</span></li>
      </ul></li>
    </ul>
    <div class="vs"><svg class="i"><use href="#cu"/></svg><div class="track"><div class="thumb tt"></div></div><svg class="i"><use href="#cd"/></svg></div>
  </div>
  <button class="nav">单构件输入</button>
  <button class="nav">报表预览</button>
</aside>

<section class="work">
  <div class="row">
    <div class="tb"><i class="grip"></i>
      <button class="t"><svg class="i"><use href="#brush"/></svg>删除</button><i class="sep"></i><button class="t"><svg class="i"><use href="#copy"/></svg>复制</button><button class="t"><svg class="i"><use href="#mirror"/></svg>镜像</button><i class="sep"></i><button class="t"><svg class="i"><use href="#move"/></svg>移动</button><button class="t"><svg class="i"><use href="#rot"/></svg>旋转</button><i class="sep"></i><button class="t" disabled><svg class="i"><use href="#ext"/></svg>延伸</button><button class="t" disabled><svg class="i"><use href="#trim"/></svg>修剪</button><i class="sep"></i><button class="t" disabled><svg class="i"><use href="#brk"/></svg>打断</button><button class="t" disabled><svg class="i"><use href="#merge"/></svg>合并</button><button class="t" disabled><svg class="i"><use href="#split"/></svg>分割</button><i class="sep"></i><button class="t"><svg class="i"><use href="#align"/></svg>对齐<i class="dd"></i></button><button class="t" disabled><svg class="i"><use href="#offset"/></svg>偏移</button><button class="t" disabled><svg class="i"><use href="#pull"/></svg>拉伸</button><i class="sep"></i><button class="t" disabled><svg class="i"><use href="#grips"/></svg>设置夹点</button>
    </div>
  </div>
  <div class="row">
    <div class="tb"><i class="grip"></i>
      <div class="cbs"><select aria-label="楼层" class="w56"><option>第2层</option></select><select aria-label="构件类型" class="w68"><option>柱</option></select><select aria-label="构件" class="w68"><option>构造柱</option></select><select aria-label="名称" class="w68"><option>GZ-3</option></select></div><i class="sep"></i><button class="t"><svg class="i"><use href="#prop"/></svg>属性</button><button class="t on"><svg class="i"><use href="#editbar"/></svg>编辑钢筋</button><button class="t"><svg class="i"><use href="#list"/></svg>构件列表</button><button class="t"><svg class="i"><use href="#pick"/></svg>拾取构件</button>
    </div>
    <div class="tb"><i class="grip"></i>
      <button class="t"><svg class="i"><use href="#ax2"/></svg>两点</button><button class="t"><svg class="i"><use href="#axp"/></svg>平行</button><button class="t"><svg class="i"><use href="#axa"/></svg>点角</button><button class="sp"><i class="dd"></i></button><button class="t"><svg class="i"><use href="#ax3"/></svg>三点辅轴</button><button class="sp"><i class="dd"></i></button><button class="t"><svg class="i"><use href="#brush"/></svg>删除辅轴</button><button class="t"><svg class="i"><use href="#dim"/></svg>尺寸标注</button><button class="sp"><i class="dd"></i></button>
    </div>
  </div>
  <div class="row last">
    <div class="tb"><i class="grip"></i>
      <button class="t on"><svg class="i"><use href="#arrow"/></svg>选择</button><button class="sp"><i class="dd"></i></button><i class="sep"></i><button class="t"><svg class="i"><use href="#pt"/></svg>点</button><button class="t"><svg class="i"><use href="#rotpt"/></svg>旋转点</button><i class="sep"></i><button class="t"><svg class="i"><use href="#smart"/></svg>智能布置<i class="dd"></i></button><i class="sep"></i><button class="t"><svg class="i"><use href="#note"/></svg>原位标注</button><button class="t"><svg class="i"><use href="#ctable"/></svg>图元柱表</button><button class="t"><svg class="i"><use href="#cend"/></svg>调整柱端头</button><button class="t"><svg class="i"><use href="#wall"/></svg>按墙位置绘制柱</button><button class="sp"><i class="dd"></i></button><button class="t"><svg class="i"><use href="#check"/></svg>查改标注</button><button class="sp"><i class="dd"></i></button><button class="t"><svg class="i"><use href="#auto"/></svg>自动生成构造柱</button>
    </div>
    <div class="tb empty"><i class="grip"></i></div>
  </div>

  <div class="canvas">
    <svg width="100%" height="100%" shape-rendering="crispEdges">
      <g stroke="#f00"><path d="M56.500 0v2000M354.500 0v2000M381.500 0v2000M728.500 0v2000M831.500 0v2000M948.500 0v2000"/><path d="M0 85.500h4000M0 193.500h4000M0 288.500h4000"/></g>
      <rect x="376.500" y="170.500" width="9" height="45" fill="#0a78f0" stroke="#fff" stroke-dasharray="4 4"/>
      <path d="M381.500 171v44M377 193.500h9" stroke="#f00"/>
      <g fill="none" stroke="#008a00"><circle cx="56.500" cy="13" r="12.500"/><circle cx="354.500" cy="13" r="12.500"/><circle cx="948.500" cy="13" r="12.500"/></g>
      <g class="axn"><text x="57" y="18">3</text><text x="355" y="18">4</text><text x="949" y="18">5</text></g>
      <path d="M55 261v-38" stroke="#0f0" stroke-width="4"/><path d="M51 225 55 211l4 14z" fill="#0f0"/>
      <path d="M56 260h38" stroke="#f00" stroke-width="4"/><path d="M92 256l13 4-13 4z" fill="#f00"/>
      <path d="m64 214 5 5 5-5m-5 5v6" stroke="#0d0" fill="none"/><path d="m92 239 9 9m0-9-9 9" stroke="#d00"/>
    </svg>
  </div>

  <div class="row snap">
    <div class="tb"><i class="grip"></i>
      <button class="t"><svg class="i"><use href="#ortho"/></svg>正交</button><button class="t on"><svg class="i"><use href="#osnap"/></svg>对象捕捉</button><button class="t"><svg class="i"><use href="#dynin"/></svg>动态输入</button>
    </div>
    <div class="tb"><i class="grip"></i>
      <button class="t"><svg class="i"><use href="#cross"/></svg>交点</button><button class="t on"><svg class="i"><use href="#perp"/></svg>垂点</button><button class="t on"><svg class="i"><use href="#mid"/></svg>中点</button><button class="t"><svg class="i"><use href="#vert"/></svg>顶点</button><button class="t"><svg class="i"><use href="#coord"/></svg>坐标</button>
    </div>
    <div class="tb off"><i class="grip"></i>
      <select aria-label="偏移方式" class="w58"><option>不偏移</option></select><i class="sep"></i>
      <label for="ox">X=</label><span class="num"><input id="ox" value="0"><i class="ud"></i></span><em>mm</em>
      <label for="oy">Y=</label><span class="num"><input id="oy" value="0"><i class="ud"></i></span><em>mm</em><i class="sep"></i>
      <input type="checkbox" id="rt"><label for="rt" class="blk">旋转</label><span class="num wide"><input aria-label="旋转角度" value="0.000"><i class="ud"></i></span><em>°</em>
    </div>
  </div>

  <div class="dock">
    <div class="dgrip"><svg viewBox="0 0 10 10"><path d="M0 0h10v10H0z" fill="#ddd" stroke="#333" stroke-width="2"/><path d="m2 2 6 6M8 2 2 8" stroke="#111" stroke-width="1.500"/><path d="M0 1h10" stroke="#a33"/></svg></div>
    <div class="dbody">
      <div class="tb full">
        <button class="t o n" aria-label="首条"><svg class="i"><use href="#first"/></svg></button><button class="t o n" aria-label="上一条"><svg class="i"><use href="#prev"/></svg></button><button class="t o n" aria-label="下一条"><svg class="i"><use href="#next"/></svg></button><button class="t o n" aria-label="末条"><svg class="i"><use href="#last"/></svg></button><i class="sep"></i><button class="t o" aria-label="上移"><svg class="i"><use href="#up"/></svg></button><button class="t o" aria-label="下移"><svg class="i"><use href="#down"/></svg></button><i class="sep"></i><button class="t" disabled><svg class="i"><use href="#ins"/></svg>插入</button><button class="t" disabled><svg class="i"><use href="#del"/></svg>删除</button><button class="t"><svg class="i"><use href="#scale"/></svg>缩尺配筋</button><button class="t"><svg class="i"><use href="#info"/></svg>钢筋信息</button><button class="t"><svg class="i"><use href="#lib"/></svg>钢筋图库</button><button class="t"><svg class="i"><use href="#other"/></svg>其他<i class="dd"></i></button><button class="t close">关闭</button><i class="sep"></i><span class="sum">单构件钢筋总重(kg)：5.517</span>
      </div>
      <div class="grid">
        <div class="tw">
        <table>
          <colgroup><col class="c33"><col class="c73"><col class="c56"><col class="c36"><col class="c33"><col class="c201"><col class="c166"><col class="c156"><col class="c61"><col class="c38"><col class="c39"><col class="c49"><col class="c61"><col class="c61"><col class="c71"><col class="c56"></colgroup>
          <thead><tr><th></th><th>筋号</th><th class="hot">直径(mm)</th><th>级别</th><th>图号</th><th>图形</th><th>计算公式</th><th>公式描述</th><th>长度(mm)</th><th>根数</th><th>搭接</th><th>损耗(%)</th><th>单重(kg)</th><th>总重(kg)</th><th>钢筋归类</th><th>搭接形</th></tr></thead>
          <tbody>
            <tr class="r1"><th class="cur">1*</th><td class="fx">全部纵筋.1</td><td class="act">6</td><td class="ic"><svg><use href="#bar"/></svg></td><td>18</td><td class="fig"><svg width="200" height="33"><path d="M33.500 9v14H170" fill="none" stroke="#000" stroke-width="2"/><text x="15" y="22">60</text><text x="84" y="17" class="rd">2500</text></svg></td><td>2500+10*d</td><td>层高+预留埋件纵筋弯折长度</td><td>2560</td><td>2</td><td>0</td><td>0</td><td>0.666</td><td>1.331</td><td>直筋</td><td>绑扎</td></tr>
            <tr class="r2"><th>2</th><td class="fx">构造柱预留<br>筋.1</td><td>6</td><td class="ic"><svg><use href="#bar"/></svg></td><td>1</td><td class="fig"><svg width="200" height="28"><path d="M23 19h150" stroke="#000" stroke-width="2"/><text x="89" y="17" class="rd">606</text></svg></td><td>59*d+42*d</td><td>搭接+锚固</td><td>606</td><td>2</td><td>0</td><td>0</td><td>0.158</td><td>0.315</td><td>直筋</td><td>绑扎</td></tr>
            <tr class="r3"><th>3</th><td class="fx">箍筋.1</td><td>8</td><td class="ic"><svg><use href="#bar"/></svg></td><td>0</td><td class="fig"><svg width="200" height="60"><path d="M95.500 4v47" stroke="#000"/><text class="mg" transform="translate(108 28) rotate(-90)">650</text><text x="95" y="58" class="mg">50</text></svg></td><td>50+650</td><td></td><td>700</td><td>14</td><td>0</td><td>0</td><td>0.277</td><td>3.871</td><td>箍筋</td><td>绑扎</td></tr>
            <tr class="r4"><th>4</th><td class="fx"></td><td></td><td></td><td></td><td></td><td></td><td></td><td></td><td></td><td></td><td></td><td></td><td></td><td></td><td></td></tr>
          </tbody>
        </table>
        </div>
        <div class="vs gv"><svg class="i"><use href="#cu"/></svg><div class="track"><div class="thumb gt"></div></div><svg class="i"><use href="#cd"/></svg></div>
        <div class="hs"><svg class="i"><use href="#cl"/></svg><div class="track"><div class="thumb ht"></div></div><svg class="i"><use href="#cr"/></svg></div>
      </div>
    </div>
    <svg class="marks" width="460" height="60"><g fill="none" stroke="#f00" stroke-width="7"><ellipse cx="72" cy="27" rx="67" ry="21"/><ellipse cx="347" cy="32" rx="107" ry="17"/></g></svg>
  </div>
</section>
</main>

<footer class="status"><span class="a">X=108845 Y=7545</span><span class="b">层高:4.5m</span><span class="c2">底标高:4.45m</span><span class="d">1(2)</span><span class="e">按鼠标左键指定第一个角点，或拾取构件图元</span><span class="g2">558.7 FPS</span></footer>

<div class="task">
  <button class="start" aria-label="开始"><svg viewBox="0 0 16 16"><path d="M0 2.300 6.500 1.400v6.100H0zM7.300 1.300 16 0v7.500H7.300zM0 8.300h6.500v6.200L0 13.600zM7.300 8.300H16V16l-8.700-1.300z" fill="#fff"/></svg></button>
  <label class="search"><svg class="cort" viewBox="0 0 22 22"><circle cx="11" cy="11" r="9" fill="none" stroke="#000" stroke-width="3"/></svg><input placeholder="在这里输入你要搜索的内容"><svg class="m" viewBox="0 0 12 16"><rect x="3.500" y=".5" width="5" height="10" rx="1.500" fill="none" stroke="#333"/><path d="M.5 7v5.500q0 1 1 1h9q1 0 1-1V7M6 13.500V16M3 15.500h6" fill="none" stroke="#333"/></svg></label>
  <svg class="tv" viewBox="0 0 16 16"><path d="M.5 0v2.500h10V0M.5 16v-2.500h10V16M.5 4.500h10v7H.5zM14.500 0v3M14.500 7v9" fill="none" stroke="#fff"/><path d="M13 4h3v2.500h-3z" fill="#fff"/></svg>
  <svg class="fan" viewBox="0 0 22 22"><rect x="1" y="1" width="20" height="20" rx="7" fill="#f0f0f0"/><path d="M11 11Q4 11 1.500 7M11 11Q11 4 15 1.500M11 11q7 0 9.500 4M11 11q0 7-4 9.500M11 0v4M0 11h3M22 11h-3M11 22v-4" stroke="#05181c" stroke-width="1.300" fill="none"/></svg>
  <label class="ie"><svg viewBox="0 0 20 20"><circle cx="10" cy="10.500" r="6.500" fill="none" stroke="#2c98e8" stroke-width="3.600"/><path d="M5 10.500h11.500" stroke="#2c98e8" stroke-width="2.600"/><path d="M13 13.500h6" stroke="#4a4f50" stroke-width="3"/><path d="M2 18.500Q-2 15 8 7T19 4" fill="none" stroke="#5ab8f8" stroke-width="1.500"/></svg><input placeholder="搜索网页和文件"><svg viewBox="0 0 20 20"><circle cx="9" cy="9" r="7" fill="none" stroke="#bbb"/><path d="m14 14 5 5" stroke="#bbb"/></svg></label>
  <svg class="spiral" viewBox="0 0 28 28"><path d="M12 7Q3 7 2 15q0 9 8 9 9 0 9-8-1-5-7-5.500-6 1-6 5.500 1 5 5 4.500 4-1 3-4.500-2-2-4 0M17 22q3-2 4-6" fill="none" stroke="#eee" stroke-width="1.300"/><path d="M21 2q4.500 1 4 6l2 4H15l2-4q-.500-5 4-6z" fill="#f3b51c"/><path d="M19 12.500h4l-2 2z" fill="#d48c10"/></svg>
  <div class="app act2"><svg viewBox="0 0 24 24"><rect width="24" height="24" rx="4" fill="#1492f4"/><path d="M12 4v13q0 2.500-3 2.500T6 16M3.500 12h16q0 4-4 4M12 5q4 0 4.500 3" fill="none" stroke="#fff" stroke-width="2"/></svg></div>
  <div class="app"><svg viewBox="0 0 24 24"><path d="M19 1Q4 0 2 10q-1 12 10 13 10-1 10-11H12q4 1 4 3-1 4-5 3-5-2-4-8 2-6 12-9z" fill="url(#gs)"/></svg></div>
  <div class="app"><svg viewBox="0 0 24 24"><rect width="24" height="24" rx="3" fill="#f0941c"/><path d="m4 4 14-1 1 15-13 3z" fill="#fff4d4"/><path d="M7 9h8M7 12h8M8 15h7" stroke="#c89030"/><path d="M9 16 20 3l2 2-11 13z" fill="#9b3a18"/></svg></div>
  <div class="app"><svg viewBox="0 0 24 24"><path d="M5 9h9v13H5z" fill="#fff"/><path d="M7 12h5M7 15h5M7 18h5" stroke="#222"/><path d="M12 7V3h6v5l-4 3v3M14 16v3" fill="none" stroke="#ffe600" stroke-width="3.400"/></svg></div>
  <div class="app"><svg viewBox="0 0 24 24"><rect width="24" height="24" rx="4" fill="#2cbf62"/><path d="M7 5v14M5 6h4M5 18h4M7 12h11M17 9v6" fill="none" stroke="#fff" stroke-width="2.400"/></svg></div>
  <div class="tscroll"><svg class="i"><use href="#cu"/></svg><svg class="i"><use href="#cd"/></svg></div>
  <svg class="ppl" viewBox="0 0 16 16"><g fill="none" stroke="#fff" stroke-width="1.200"><circle cx="10.500" cy="4" r="3"/><path d="M8 8q5-2 7 4"/><circle cx="4.500" cy="8.500" r="2.500"/><path d="M.5 16q0-5 4-5t4 5"/></g></svg>
  <div class="cpu">31%<br>CPU使用</div>
  <div class="tray">
    <svg viewBox="0 0 16 16"><path d="m2 11 6-6 6 6" fill="none" stroke="#fff" stroke-width="1.300"/></svg>
    <svg viewBox="0 0 16 16"><path d="M5 5.500h9.500v7H5" fill="none" stroke="#fff"/><path d="M6 7h7v4H6zM15 8h1v2h-1zM1 4h4v4H1zM2 1v3h1V1zM4 1v3h1V1z" fill="#fff"/><path d="M3 8v4h2" stroke="#fff" fill="none"/></svg>
    <svg viewBox="0 0 16 16"><g fill="none" stroke="#ddd" stroke-width="1.300"><path d="M2 14Q2 4 13 3M5 14q0-7 8-8M8 14q0-4 5-5M11 14q0-2 2-2"/></g></svg>
    <svg viewBox="0 0 16 16"><path d="M1 6h3l4-4v12l-4-4H1zM10 6q1 2 0 4M12 4q2 4 0 8M14 2q3 6 0 12" fill="none" stroke="#fff"/></svg>
    <svg class="k" viewBox="0 0 24 14"><path d="M.5.500h23v13H.5z" fill="none" stroke="#fff"/><path d="M3 4h18M3 7h18" stroke="#fff" stroke-dasharray="2 1"/><path d="M6 10.500h12" stroke="#fff"/></svg>
    <span>中</span>
    <svg class="sg" viewBox="0 0 28 28"><use href="#sogou"/></svg>
  </div>
  <div class="clock">9:34<br>2018/11/8</div>
  <svg class="act3" viewBox="0 0 16 16"><path d="M.5 1.500h15v11h-5L8 15l-2.500-2.500h-5z" fill="none" stroke="#fff"/></svg>
  <i class="edge"></i>
</div>
</body>
</html>
```
FILE: styles.css
```css
* { box-sizing: border-box; }
html, body { height: 100%; margin: 0; }
body {
  display: flex; flex-direction: column; overflow: hidden;
  min-height: 100vh; background: #f0f0f0; color: #000;
  font: 12px/16px "Noto Sans", "Noto Sans CJK SC", sans-serif;
}
button, input, select { font: inherit; color: inherit; }
button { border: 0; background: none; padding: 0; white-space: nowrap; }
h1 { margin: 0; font: inherit; }
ul { list-style: none; margin: 0; padding: 0; }
.sprite { position: absolute; width: 0; height: 0; }
.i { width: 16px; height: 16px; flex: none; display: block; }

/* title bar */
.title { position: relative; display: flex; align-items: center; gap: 5px; height: 23px; padding-left: 2px; background: #fff; flex: none; }
.title h1 { flex: 1; white-space: nowrap; overflow: hidden; font-family: Inter, "Noto Sans CJK SC", sans-serif; }
.wbtns { display: flex; }
.wbtns button { width: 46px; height: 20px; display: grid; place-items: center; }
.wbtns svg { width: 12px; height: 12px; }
.ball {
  position: absolute; left: 717px; top: -29px; width: 48px; height: 48px; z-index: 2;
  border-radius: 50%; border: 2px solid #e8e8e8; background: #46c866; color: #fff;
  font-weight: 700; font-size: 12px; text-align: center; padding-top: 26px; box-shadow: 0 2px 4px #0006;
}

/* menu bar */
.menu { position: relative; display: flex; align-items: center; gap: 11px; height: 28px; padding: 1px 6px 0 7px; flex: none; }
.menu button { display: flex; align-items: center; gap: 4px; }
.menu .newchg { gap: 4px; margin-left: -3px; }
.menu .who { margin-left: 17px; }
.menu .right { display: flex; align-items: center; gap: 7px; margin-left: auto; }
.dd { width: 8px; height: 16px; flex: none; display: grid; place-items: center; }
.dd::before { content: ""; border: 3px solid transparent; border-top-color: #000; border-bottom: 0; }
.ime {
  position: absolute; left: 1020px; top: -4px; width: 182px; height: 24px; z-index: 2;
  display: flex; align-items: center; justify-content: space-between; padding: 0 4px 0 8px;
  background: #fbfcfe; border: 1px solid #9fb4cc; color: #1f74c8;
}
.ime b { font-size: 15px; }
.slogo { position: absolute; left: -27px; top: -5px; width: 30px; height: 30px; }

/* tool bars */
.row { display: flex; gap: 2px; height: 28px; flex: none; }
.last { height: 26px; }
.tb {
  display: flex; align-items: center; height: 25px; padding-right: 1px; border-radius: 3px;
  background: linear-gradient(#fdfdfd, #f0f0f0);
}
.t { display: flex; align-items: center; gap: 4px; height: 23px; padding: 0 3px; border: 1px solid transparent; border-width: 1px 1px 1px 0; }
.t:disabled { color: #8c8c8c; }
.t.on { border: 1px solid #0a78d6; background: #dce9f5; padding: 0 2px; }
.t .dd { margin-left: -2px; margin-right: -1px; }
.sp { width: 12px; height: 22px; display: grid; place-items: center; }
.sep { width: 6px; height: 15px; border-left: 1px solid #bcbcbc; margin-left: 3px; flex: none; margin-right: -3px; }
.sep.tall { height: 24px; border-color: #777; margin: 0; width: 4px; }
.grip { width: 3px; height: 16px; margin: 0 1px 0 4px; flex: none; background: radial-gradient(circle at 1px 1px, #a8a8a8 1px, transparent 1px) 0 0 / 3px 4px; }
.more { width: 10px; height: 8px; margin-left: auto; align-self: flex-start; margin-top: 3px; margin-right: 2px; }
.top { height: 30px; gap: 3px; padding: 1px 0 0 2px; }
.ga { width: 149px; }
.gb { width: 547px; }
.gc { flex: 1; }
.cbx { display: flex; align-items: center; gap: 2px; background: #fff; padding-left: 2px; margin-right: 2px; height: 24px; }
select {
  appearance: none; border: 0; border-radius: 0; height: 22px; padding: 0 14px 0 2px; background: #fff
    url("data:image/svg+xml,%3Csvg xmlns='http://www.w3.org/2000/svg' width='6' height='3'%3E%3Cpath d='M0 0h6L3 3z'/%3E%3C/svg%3E") no-repeat right 1px center;
}
.s2d { width: 42px; }
.w56 { width: 56px; }
.w68 { width: 68px; }
.w58 { width: 56px; }
.cbs { display: flex; gap: 4px; margin-right: 3px; }
.empty { width: 33px; background: linear-gradient(90deg, #fff, #f0f0f0); }

/* main area */
main { flex: 1; display: flex; min-height: 0; }
aside { width: 162px; flex: none; display: flex; flex-direction: column; font-family: "Noto Sans Mono CJK SC", "Noto Sans CJK SC", sans-serif; }
.ahead { display: flex; align-items: center; gap: 3px; height: 15px; flex: none; margin-bottom: 2px; background: #0a5ae6; color: #fff; line-height: 15px; padding-right: 2px; }
.ahead span { flex: 1; }
.nav { height: 22px; flex: none; border: 1px solid #a0a0a0; border-top-color: #c8c8c8; background: #f0f0f0; text-align: center; margin-right: 1px; }
.tools { display: flex; gap: 7px; height: 27px; flex: none; padding: 6px 6px; background: linear-gradient(#f8f8f8, #ececec); }
.treebox { flex: 1; min-height: 0; display: flex; border: 1px solid #828790; margin: 0 2px 2px 2px; background: #fff; overflow: hidden; padding: 1px; }
.tree { flex: 1; min-width: 0; overflow: hidden; padding-left: 4px; }
.tree .f { display: flex; align-items: center; height: 16px; }
.tree .f span { margin-left: 4px; }
.c { width: 14px; height: 14px; flex: none; margin-right: 4px; }
.c.g { opacity: .55; }
.tree ul { margin-left: 7px; padding-left: 18px; border-left: 1px dotted #888; }
.tree ul li { display: flex; align-items: center; height: 16px; border-left: 1px dotted #888; white-space: nowrap; }
.tree ul li::before { content: ""; width: 10px; border-top: 1px dotted #888; flex: none; }
.tree ul li span { padding: 0 4px; line-height: 16px; }
.tree .sel { background: linear-gradient(#d9d9d9, #d9d9d9) 9px 0 / 80px 16px no-repeat; }
.vs { width: 15px; flex: none; display: flex; flex-direction: column; align-items: center; background: #f0f0f0; }
.vs .track { flex: 1; width: 15px; }
.thumb { background: #cdcdcd; }
.tt { margin-top: 26px; height: 367px; }

.work { flex: 1; min-width: 0; display: flex; flex-direction: column; padding-left: 4px; }
.canvas { flex: 1; min-height: 0; background: #000; overflow: hidden; margin-right: 1px; }
.canvas svg { display: block; }
.axn { fill: #fff; font-size: 14px; text-anchor: middle; }
.snap { height: 31px; padding-top: 2px; }
.off { gap: 2px; }
.off .sep { margin-right: -3px; }
.off label, .off em { color: #777; font-style: normal; }
.off .blk { color: #000; margin: 0 2px; }
.num { display: flex; align-items: center; width: 58px; height: 23px; border: 1px solid #707070; background: #f4f4f4; }
.num.wide { width: 68px; }
.num input { flex: 1; min-width: 0; border: 0; background: none; text-align: right; color: #808080; padding: 0 6px 0 0; }
.ud { width: 14px; display: flex; flex-direction: column; align-items: center; gap: 8px; }
.ud::before { content: ""; border: 3px solid transparent; border-bottom-color: #555; border-top: 0; }
.ud::after { content: ""; border: 3px solid transparent; border-top-color: #555; border-bottom: 0; }
input[type=checkbox] { appearance: none; width: 12px; height: 12px; margin: 0 4px 0 2px; border: 1px solid #888; background: #f6f6f6; }

/* docked rebar grid */
.dock { position: relative; display: flex; height: 202px; flex: none; }
.dgrip { width: 13px; padding: 2px 1px; flex: none; background: radial-gradient(circle at 2px 2px, #b8b8b8 1px, transparent 1px) 2px 16px / 5px 5px; }
.dgrip svg { width: 10px; height: 10px; display: block; }
.dbody { flex: 1; min-width: 0; display: flex; flex-direction: column; padding-top: 3px; }
.full { height: 25px; flex: none; margin: 0 2px 2px 0; }
.full .sep { margin-left: 1px; }
.full .close { margin-left: 2px; margin-right: 2px; }
.t.n { padding: 0 4px 0 3px; }
.sum { padding-left: 7px; }
.grid {
  flex: 1; min-height: 0; display: grid; grid-template: 1fr 18px / 1fr 18px; border: 1px solid #a0a0a0; margin-right: 1px;
  background: #f0f0f0; font-family: "Noto Sans Mono CJK SC", "Noto Sans CJK SC", sans-serif;
}
.tw { grid-area: 1 / 1; overflow: hidden; background: #fff; min-width: 0; min-height: 0; }
.gv { grid-area: 1 / 2; padding-top: 1px; min-height: 0; }
.gt { height: 47px; }
.hs { grid-area: 2 / 1; display: flex; align-items: center; background: #f0f0f0; }
.hs .track { flex: 1; height: 15px; }
.ht { width: 72%; height: 15px; }
table { border-collapse: separate; border-spacing: 0; table-layout: fixed; width: 1190px; line-height: 12px; }
th, td { padding: 0 0 0 2px; border: 0 solid #b8b8b8; border-width: 0 1px 1px 0; text-align: left; white-space: nowrap; font-weight: 400; overflow: hidden; }
td { background: #ccffd9; }
th { background: linear-gradient(90deg, #fff, #ececec); text-align: center; padding: 0; }
thead th { height: 19px; background: linear-gradient(#fff, #ececec); }
thead .hot { background: linear-gradient(#fad9a0, #f3bc5e); color: #641450; }
.cur { background: #ffcf85; color: #641450; }
.act { background: #aae8d8; }
td.fx { border-right: 1px solid #000; }
.r1 { height: 34px; }
.r2 { height: 29px; }
.r3 { height: 61px; }
.r4 { height: 20px; }
.r4 td { background: #fff; }
td.ic, td.fig { padding: 0; }
.ic svg { width: 12px; height: 12px; display: block; margin: auto; }
.fig svg { display: block; font: 11px "Liberation Sans", sans-serif; }
.rd { fill: #f00; }
.mg { fill: #f0f; }
.c33 { width: 33px; } .c73 { width: 73px; } .c56 { width: 56px; } .c36 { width: 36px; }
.c201 { width: 201px; } .c166 { width: 166px; } .c156 { width: 156px; } .c61 { width: 61px; }
.c38 { width: 38px; } .c39 { width: 39px; } .c49 { width: 49px; } .c71 { width: 71px; }
.marks { position: absolute; left: -1px; top: 74px; pointer-events: none; }

/* status bar */
.status { display: flex; gap: 2px; height: 22px; padding-top: 2px; flex: none; background: #fff; font-family: "Noto Sans Mono CJK SC", "Noto Sans CJK SC", sans-serif; }
.status span { border: 1px solid #d0d0d0; background: #f6f6f6; padding: 1px 1px; white-space: nowrap; }
.a { width: 148px; } .b { width: 78px; } .c2 { width: 98px; } .d { width: 48px; }
.e { flex: 1; } .g2 { width: 70px; }

/* task bar */
.task { display: flex; align-items: center; height: 40px; flex: none; background: #05181c; color: #fff; line-height: 17px; }
.start { width: 48px; height: 40px; background: #000; display: grid; place-items: center; }
.start svg { width: 16px; height: 16px; }
.search { display: flex; align-items: center; width: 344px; height: 40px; background: #f2f2f2; padding: 0 15px 0 9px; gap: 9px; }
.search input { flex: 1; min-width: 0; border: 0; background: none; font-size: 14px; padding: 0; }
.search input::placeholder { color: #333; }
.cort { width: 22px; height: 22px; }
.m { width: 12px; height: 16px; }
.tv { width: 17px; height: 15px; margin-left: 15px; }
.fan { width: 22px; height: 22px; margin-left: 32px; }
.ie { display: flex; align-items: center; gap: 5px; width: 150px; height: 30px; margin-left: 14px; padding: 0 7px 0 3px; background: #4a4f50; border: 1px solid #777; }
.ie svg { width: 19px; height: 19px; flex: none; }
.ie input { flex: 1; min-width: 0; border: 0; background: none; padding: 0; }
.ie input::placeholder { color: #b4b4b4; }
.spiral { width: 28px; height: 28px; margin: 0 12px 0 13px; }
.app { width: 34px; height: 40px; margin: 0 4px; display: grid; place-items: center; border-bottom: 2px solid #76b9ed; }
.app svg { width: 24px; height: 24px; }
.act2 { width: 41px; margin: 0; background: #344a51; }
.tscroll { width: 17px; height: 40px; display: flex; flex-direction: column; justify-content: space-between; background: #f0f0f0; margin-left: 2px; padding: 2px 0 0; }
.ppl { width: 16px; height: 16px; margin-left: 22px; }
.cpu, .clock { text-align: center; }
.cpu { width: 56px; margin-left: 27px; white-space: nowrap; }
.tray { display: flex; align-items: center; gap: 9px; margin-left: auto; }
.tray svg { width: 16px; height: 16px; }
.tray .k { width: 24px; height: 14px; }
.tray .sg { margin-left: 4px; }
.clock { width: 70px; margin-left: 11px; }
.act3 { width: 17px; height: 17px; margin: 0 20px 0 14px; }
.edge { width: 4px; height: 40px; border-left: 1px solid #555; }
```
